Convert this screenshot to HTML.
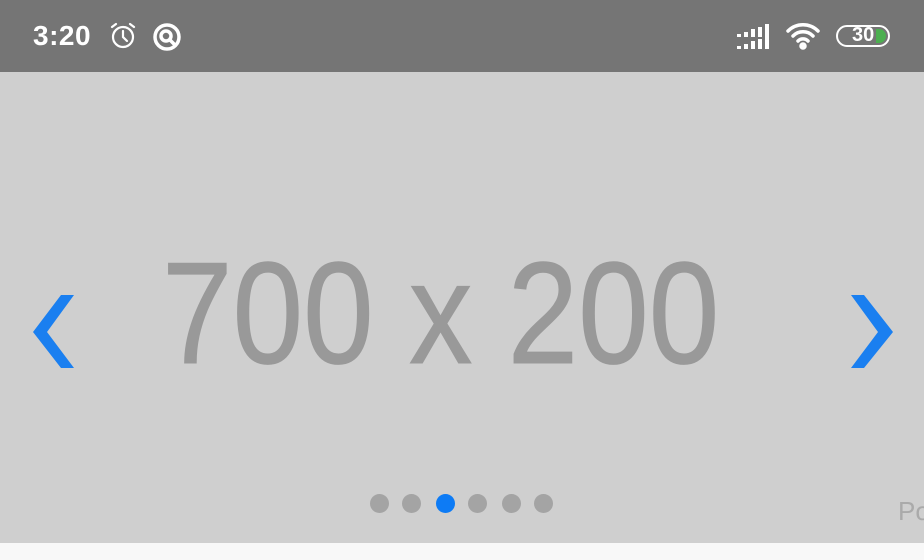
<!DOCTYPE html>
<html><head><meta charset="utf-8"><style>
html,body{margin:0;padding:0;width:924px;height:560px;overflow:hidden;background:#f8f8f8;font-family:"Liberation Sans",sans-serif}
.sb{position:absolute;left:0;top:0;width:924px;height:72px;background:#757575;color:#fff}
.time{position:absolute;left:33px;top:20px;font-size:28px;font-weight:bold;letter-spacing:0.5px}
.main{position:absolute;left:0;top:72px;width:924px;height:471px;background:#cfcfcf}
.big{position:absolute;left:162px;top:241px;font-size:145px;color:#999;line-height:1;white-space:nowrap;transform:scaleX(0.875);transform-origin:left top;-webkit-text-stroke:1px #999}
.dot{position:absolute;top:494px;width:19px;height:19px;border-radius:50%;background:#a4a4a4}
.po{position:absolute;left:898px;top:496px;font-size:26px;color:#aaa}
</style></head><body>
<div class="sb">
<div class="time">3:20</div>
<svg style="position:absolute;left:108px;top:21px" width="30" height="30" viewBox="0 0 30 30" fill="none" stroke="#fff" stroke-width="2.2"><circle cx="15" cy="16" r="10"/><path d="M15 10v6l4 4M4 6l4-3M26 6l-4-3" stroke-linecap="round"/></svg>
<svg style="position:absolute;left:151px;top:21px" width="32" height="32" viewBox="0 0 32 32" fill="none" stroke="#fff" stroke-width="3.5"><circle cx="16" cy="16" r="12"/><circle cx="15" cy="15" r="5"/><path d="M18 18l6 6"/></svg>
<svg style="position:absolute;left:736px;top:24px" width="36" height="26" viewBox="0 0 36 26" fill="#fff"><rect x="1" y="10" width="4" height="3"/><rect x="8" y="8" width="4" height="5"/><rect x="15" y="5" width="4" height="8"/><rect x="22" y="3" width="4" height="10"/><rect x="29" y="0" width="4" height="13"/><rect x="1" y="22" width="4" height="3"/><rect x="8" y="20" width="4" height="5"/><rect x="15" y="17" width="4" height="8"/><rect x="22" y="15" width="4" height="10"/><rect x="29" y="13" width="4" height="12"/></svg>
<svg style="position:absolute;left:786px;top:22px" width="34" height="28" viewBox="0 0 34 28" fill="none" stroke="#fff" stroke-width="3.5" stroke-linecap="round"><path d="M2 9a21 21 0 0 1 30 0M7 14a14 14 0 0 1 20 0M12 19a7 7 0 0 1 10 0"/><circle cx="17" cy="24" r="2" fill="#fff"/></svg>
<div style="position:absolute;left:836px;top:25px;width:54px;height:22px;border:2.5px solid #fff;border-radius:12px;box-sizing:border-box"></div>
<div style="position:absolute;left:876px;top:29px;width:10px;height:14px;background:#4caf50;border-radius:0 7px 7px 0"></div>
<div style="position:absolute;left:852px;top:24px;font-size:20px;font-weight:bold;color:#fff">30</div>
</div>
<div class="main"></div>
<div class="big">700 x 200</div>
<svg style="position:absolute;left:0;top:0" width="924" height="560"><polygon points="74,295 61,295 33,332 61,368 74,368 47,332" fill="#1a7ff0"/><polygon points="851,295 864,295 893,332 864,368 851,368 878,332" fill="#1a7ff0"/></svg>
<div class="dot" style="left:370px"></div><div class="dot" style="left:402px"></div><div class="dot" style="left:436px;background:#0d7bf5"></div><div class="dot" style="left:468px"></div><div class="dot" style="left:502px"></div><div class="dot" style="left:534px"></div>
<div class="po">Po</div>
</body></html>
